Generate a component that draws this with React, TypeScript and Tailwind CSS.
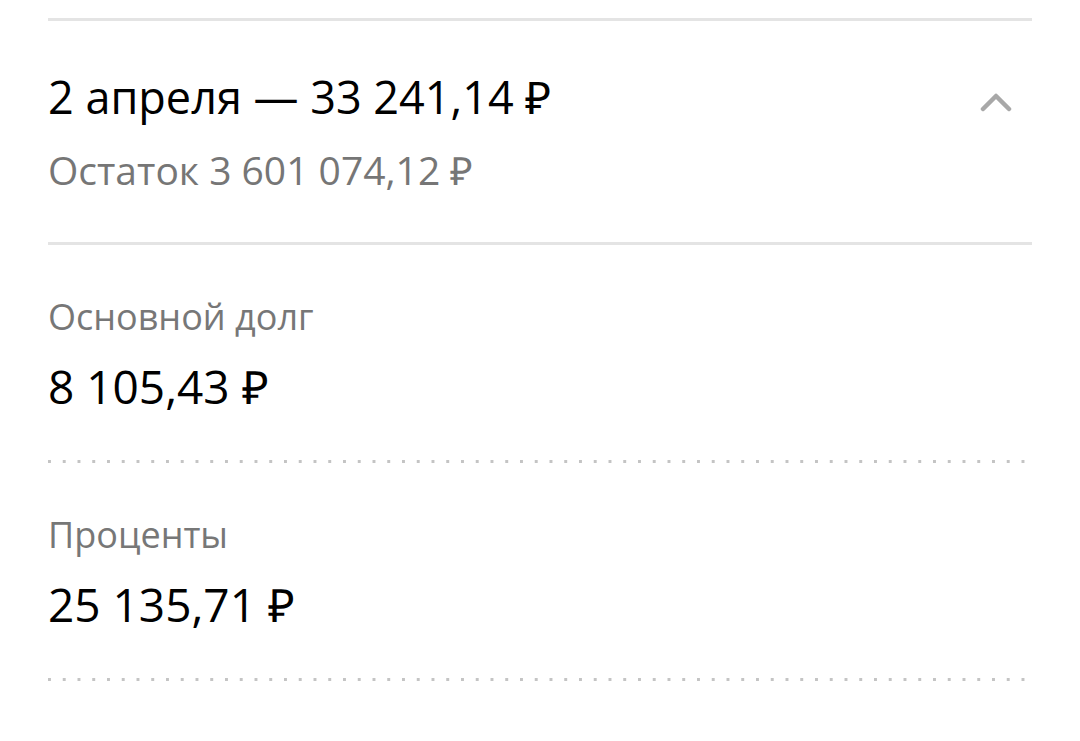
import React from 'react';

const Row = ({ label, value }: { label: string; value: string }) => (
  <div>
    <div className="pt-[52px] text-[36px] leading-[40px] text-[#777777]">{label}</div>
    <div className="mt-[27px] text-[46px] leading-[44px] text-black">{value}</div>
    <div className="mt-[52px] h-[3px] w-full bg-[linear-gradient(to_right,#c4c4c4_3px,transparent_3px)] bg-[length:14.76px_3px] bg-repeat-x" />
  </div>
);

export default function App() {
  return (
    <div className="min-h-screen bg-white px-12 pt-[18px] font-['Open_Sans',sans-serif]">
      <div className="h-[3px] w-full bg-[#e4e4e4]" />
      <div className="flex items-start justify-between pt-[52px] pb-[52px]">
        <div>
          <div className="text-[45px] leading-[48px] text-black">2 апреля — 33 241,14 ₽</div>
          <div className="mt-[29px] text-[39px] leading-[40px] text-[#767676]">Остаток 3 601 074,12 ₽</div>
        </div>
        <svg className="mr-[20px] mt-[19px]" width="32" height="20" viewBox="0 0 32 20" fill="none">
          <path d="M3 17 L16 4 L29 17" stroke="#a8a8a8" strokeWidth="4.5" strokeLinecap="round" strokeLinejoin="round" />
        </svg>
      </div>
      <div className="h-[3px] w-full bg-[#e4e4e4]" />
      <Row label="Основной долг" value="8 105,43 ₽" />
      <Row label="Проценты" value="25 135,71 ₽" />
    </div>
  );
}
